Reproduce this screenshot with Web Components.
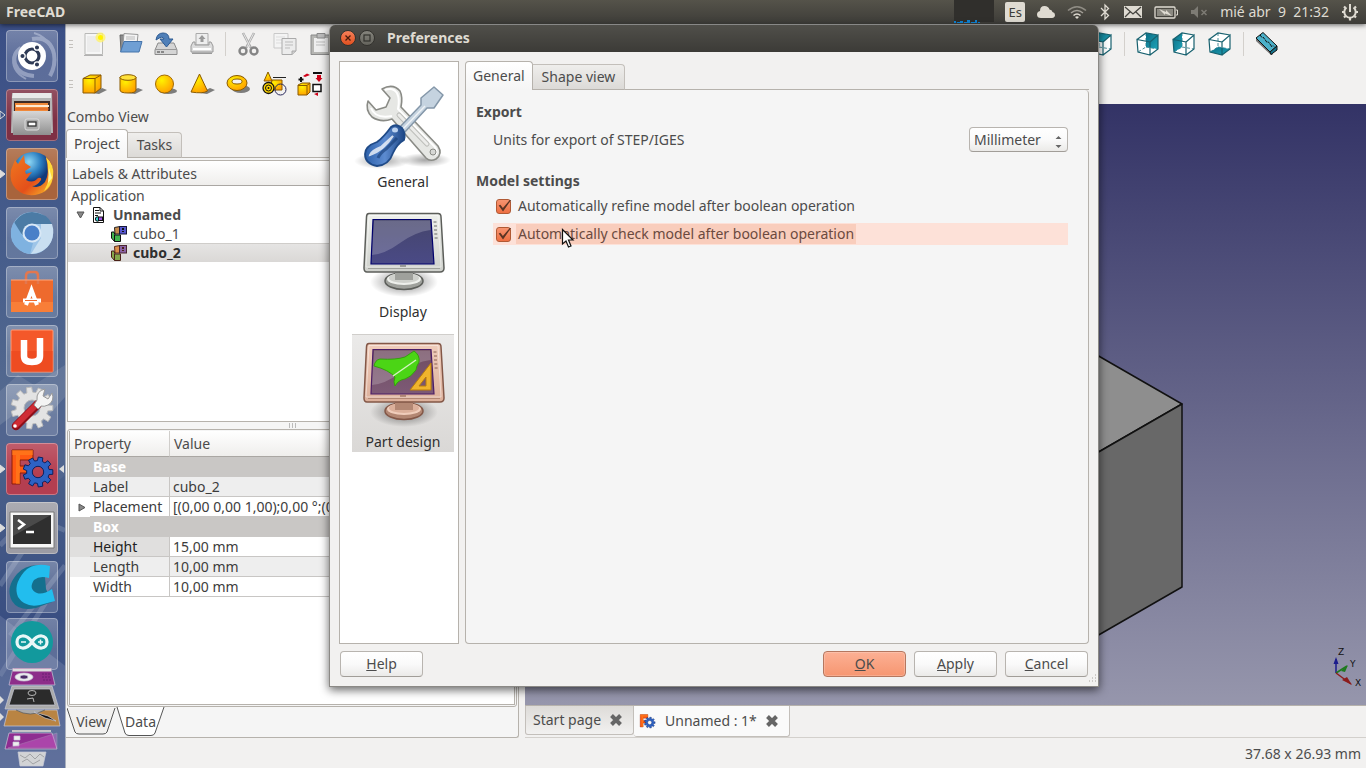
<!DOCTYPE html>
<html lang="es">
<head>
<meta charset="utf-8">
<title>FreeCAD</title>
<style>
  html, body { margin: 0; height: 100%; overflow: hidden; }
  body {
    font: 14px/20px "Noto Sans", "Open Sans", sans-serif;
    color: #4c4c4c;
    background: #f2f1f0;
    --frame: #b6b2ac;
    --window: #f2f1f0;
    --pane: #f5f5f5;
  }
</style>
</head>
<body>
<desk-top></desk-top>

<script>
// ---------- Icons ----------
const cube = (face) => `<defs><linearGradient id="tl" y2="1"><stop stop-color="#0b6e85"/><stop offset="1" stop-color="#1fa3b8"/></linearGradient></defs>
  <path d="M1 7.500L14 10V23L2 20ZM14 10L22 3V17L14 23ZM1 7.500L10 1L22 3L14 10Z" fill="#fff"/>
  <path d="M10 1V15L2 20M10 15L22 17" fill="none" stroke="#4b8e9a" stroke-dasharray="3 2"/>
  <path d="${face}" fill="url(#tl)"/>
  <path d="M1 7.500L14 10V23L2 20ZM14 10L22 3V17L14 23M1 7.500L10 1L22 3" fill="none" stroke="#17616f" stroke-width="1.200"/>`;

const gold = `<defs><radialGradient id="gd" cx=".35" cy=".3" r=".8"><stop stop-color="#fff200"/><stop offset=".5" stop-color="#ffc400"/><stop offset="1" stop-color="#ff9a00"/></radialGradient></defs>`;
const goldShadow = `<path d="M10 21L20 16L25 18L17 22Z" fill="#555" opacity=".75"/>`;

const cog = (cx, cy, r, n, fill, stroke) => {
  let d = '';
  for (let i = 0; i < n; i++) {
    [[-.32, r * .76], [-.22, r], [.22, r], [.32, r * .76]].forEach(([o, rad]) => {
      const a = (i + o) * 2 * Math.PI / n;
      d += `${d ? 'L' : 'M'}${(cx + Math.cos(a) * rad).toFixed(1)} ${(cy + Math.sin(a) * rad).toFixed(1)}`;
    });
  }
  const h = r * .38;
  d += `ZM${cx - h} ${cy}a${h} ${h} 0 1 0 ${2 * h} 0a${h} ${h} 0 1 0 ${-2 * h} 0Z`;
  return `<path fill-rule="evenodd" d="${d}" fill="${fill}" stroke="${stroke}"/>`;
};

const monitor = (c) => `
  <defs>
    <radialGradient id="sh"><stop offset=".3" stop-color="#000" stop-opacity=".35"/><stop offset="1" stop-color="#000" stop-opacity="0"/></radialGradient>
    <linearGradient id="sc" x2="0" y2="1"><stop stop-color="${c.top}"/><stop offset="1" stop-color="${c.low}"/></linearGradient>
    <linearGradient id="bs" x2="0" y2="1"><stop stop-color="${c.light}"/><stop offset="1" stop-color="${c.body}"/></linearGradient>
  </defs>
  <ellipse cx="49" cy="77" rx="34" ry="15" fill="url(#sh)"/>
  <ellipse cx="49" cy="76" rx="19" ry="8.500" fill="${c.neck}" stroke="${c.edge}" stroke-width="1.500"/>
  <ellipse cx="49" cy="74" rx="17" ry="6" fill="${c.light}"/>
  <ellipse cx="49" cy="73" rx="15" ry="5" fill="${c.body}"/>
  <rect x="40" y="66" width="18" height="9" fill="${c.neck}"/>
  <path d="M14 8.500H83Q86 8.500 86 12L89 63Q89 67 85 67H12Q9 67 9 63L11.500 12Q11.500 8.500 14 8.500Z" fill="url(#bs)" stroke="${c.edge}" stroke-width="1.500"/>
  <path d="M14 10.500H83L86 62H11Z" fill="none" stroke="#fff" stroke-opacity=".45"/>
  <path d="M13 63.500H85" stroke="${c.neck}"/>
  <path d="M18 14.500H76L79 59H16Z" fill="url(#sc)" stroke="${c.line}" stroke-width="1.200"/>
  <path d="M19 15.500H75L75.500 25Q60 27 45 38T17 50Z" fill="#fff" opacity=".2"/>
  <path d="M78.500 17h3M79 21h3M79 25h3M79.300 29h3M79.600 33h3" stroke="${c.edge}" stroke-width="1.600" opacity=".6"/>
  <path d="M45 61h6" stroke="${c.edge}"/>`;

const FREECAD = `<path d="M6 7H27V17H14V23H22V30H14V41H6Z" fill="#ff5a12" stroke="#8a1d08"/>
  <path d="M6 7H27V12H14V41H10V12H6Z" fill="#ff8a1f" opacity=".5"/>${cog(32, 29, 15, 9, '#2d62c4', '#0b2260')}`;

const ICONS = {
  // document toolbar
  new: [24, `<path d="M3 1.500H20.500V22.500H3Z" fill="#f6f6f6" stroke="#b9b9b7"/><path d="M5 4H18V20H5Z" fill="#ececec"/><path d="M2 23.500H21" stroke="#888" opacity=".6"/><circle cx="18.500" cy="5.500" r="5" fill="#fff36a" opacity=".8"/><circle cx="18.500" cy="5.500" r="2.500" fill="#fff200"/>`],
  open: [24, `<path d="M2 3H9L11 5H19V19H3Z" fill="#8d8d8d" stroke="#666"/><path d="M6 1.500L20 2.500L19 12H5Z" fill="#f4f4f4" stroke="#999"/><path d="M8 5H17M8 7H17" stroke="#bbb"/><path d="M6 9.500H24L21 20H2.500Z" fill="#6f9fd4" stroke="#4574ab"/>`],
  save: [24, `<path d="M4 11H20L23 18V22.500H1V18Z" fill="#d5d5d5" stroke="#8b8b8b"/><path d="M1 17.500H23" stroke="#999"/><path d="M3 20h3M7 20h3" stroke="#888" stroke-width="2"/><path d="M2 8Q3 1 9 1Q15 1 15 7H19L12.500 15L6 7H10Q9 3 2 8Z" fill="#4f7fb8" stroke="#2c5a92"/>`],
  print: [24, `<path d="M6 1.500H18V13H6Z" fill="#eee" stroke="#aaa"/><path d="M12 3L15.500 7H13.500V10H10.500V7H8.500Z" fill="#999"/><path d="M3 10H5V13H19V10H21L23 14V20H1V14Z" fill="#dcdcdc" stroke="#9a9a9a"/><path d="M3 17H21" stroke="#fff" stroke-width="2"/><path d="M2 20.500H22V22H2Z" fill="#999"/>`],
  cut: [24, `<path d="M6 1L14 16M17 1L9 16" stroke="#aaa" stroke-width="2.500"/><path d="M6.500 1.500L13 15M16.500 1.500L10 15" stroke="#e6e6e6"/><ellipse cx="6" cy="19" rx="3.500" ry="3.500" fill="none" stroke="#858585" stroke-width="2.400"/><ellipse cx="17" cy="19" rx="3.500" ry="3.500" fill="none" stroke="#858585" stroke-width="2.400"/>`],
  copy: [24, `<path d="M1 1.500H15V16H1Z" fill="#f4f4f4" stroke="#c9c9c9"/><path d="M3 5h9M3 8h9M3 11h7" stroke="#ddd"/><path d="M9 6.500H23V19L19 22.500H9Z" fill="#ececec" stroke="#aaa"/><path d="M12 10h8M12 13h8M12 16h5" stroke="#bbb"/><path d="M19 22.500V19H23" fill="#ccc" stroke="#aaa"/>`],
  paste: [24, `<path d="M2 3H22V22.500H2Z" fill="#b5b5b2" stroke="#8a8a8a"/><path d="M5 6H19V20H5Z" fill="#eee"/><path d="M8 1.500H16V6H8Z" fill="#bbb" stroke="#888"/><path d="M7 10h9M7 13h9" stroke="#bbb"/>`],
  // part primitives
  box: [24, goldShadow + gold + `<path d="M1 6.500L8 3H19V16L13 21H1Z" fill="url(#gd)" stroke="#8a5b00"/><path d="M1 6.500H13L19 3M13 6.500V21" fill="none" stroke="#8a5b00"/>`],
  cylinder: [24, goldShadow + gold + `<path d="M2 5V18Q2 21 10 21T18 18V5Z" fill="url(#gd)" stroke="#8a5b00"/><ellipse cx="10" cy="5.500" rx="8" ry="2.800" fill="#ffe13a" stroke="#8a5b00"/>`],
  sphere: [24, `<ellipse cx="14" cy="19" rx="9" ry="3" fill="#555" opacity=".75"/>` + gold + `<circle cx="10.500" cy="12" r="9" fill="url(#gd)" stroke="#a36b00"/>`],
  cone: [24, goldShadow + gold + `<path d="M9.500 2L17.500 19Q13 22 1 20Z" fill="url(#gd)" stroke="#8a5b00"/>`],
  torus: [24, `<ellipse cx="15" cy="17" rx="9" ry="4" fill="#555" opacity=".75"/>` + gold + `<path fill-rule="evenodd" d="M1 11a10 7.500 0 1 0 20 0a10 7.500 0 1 0 -20 0M6 9.500a5 2.500 0 1 0 10 0a5 2.500 0 1 0 -10 0" fill="url(#gd)" stroke="#8a5b00"/>`],
  primitives: [24, gold + `<path d="M10 8H20V18H8Z" fill="url(#gd)" stroke="#8a5b00"/><path d="M6 0L10 9H2Z" fill="url(#gd)" stroke="#8a5b00"/><path d="M11 5.500H24" stroke="#222"/><circle cx="6.500" cy="16" r="5.500" fill="#ffd500" stroke="#111" stroke-width="1.300"/><circle cx="6.500" cy="16" r="3" fill="none" stroke="#111"/><circle cx="6.500" cy="16" r="1" fill="#111"/><circle cx="18.500" cy="17.500" r="5.500" fill="none" stroke="#27275c"/>`],
  builder: [24, gold + `<path d="M0 13L4 11H12V20L9 23H0Z" fill="url(#gd)" stroke="#8a5b00"/><path d="M0 13.500H9L12 11M9 14V23" fill="none" stroke="#8a5b00"/><path d="M15 12.500H23V19.500H15Z" fill="#fff" stroke="#111" stroke-width="1.500"/><path d="M15 1H24" stroke="#111" stroke-width="2"/><path d="M3 5V10M.5 7.500H5.500" stroke="#111" stroke-width="2"/><path d="M5 4L9 1.500L12 3L7 5ZM19 3H23V6H24.500L21 10L17.500 6H19ZM16 22L20 20.500V24Z" fill="#d00018"/>`],
  // view toolbar
  viewTop: [24, cube('M1 7.500L10 1L22 3L14 10Z')],
  viewRear: [24, cube('M10 1L22 3V17L10 15Z')],
  viewLeft: [24, cube('M1 7.500L10 1V15L2 20Z')],
  viewBottom: [24, cube('M2 20L10 15L22 17L14 23Z')],
  measure: [24, `<path d="M1 6L6 11L18 23L16 23L1 9Z" fill="#777"/><path d="M1 6L8 .5L22 14L15 20Z" fill="#4bb0c9" stroke="#111"/><path d="M5 3l2 2.500M8 5l1.500 2M10 7.500l2 3M13 9.500l1.500 2M15 12l2 3M18 13.500l1 1" stroke="#111"/><path d="M15 20L22 14V18L16 22.500Z" fill="#16758e" stroke="#111"/>`],
  // tree
  doc: [16, `<path d="M2.500 .5H9L12.500 4V15.500H2.500Z" fill="#fff" stroke="#111"/><path d="M4 3.500h4M4 6h6M4 8.500h3" stroke="#111"/><path d="M9 .5V4H12.500" fill="none" stroke="#111"/><circle cx="6.500" cy="12" r="2.200" fill="#35d0d0" stroke="#111"/><rect x="7.500" y="10" width="4" height="3.500" fill="#a050e0" stroke="#111"/>`],
  solid: [16, `<path d="M3.500 1.500L9 .5V8H4Z" fill="#c68b4c" stroke="#222"/><rect x="8.500" y=".5" width="7" height="7.500" fill="#5758cf" stroke="#17173b"/><path d="M12 2v2M12 5v1" stroke="#111" stroke-width="2"/><path d="M.5 6H3L4 9H9.500V15.500H3.500L.5 12Z" fill="#41b44e" stroke="#111"/><path d="M3.500 15.500V9" stroke="#111"/>`],
  solidSel: [16, `<path d="M3.500 1.500L9 .5V8H4Z" fill="#dd904c" stroke="#5b2c17"/><rect x="8.500" y=".5" width="7" height="7.500" fill="#8a62a4" stroke="#4a2430"/><path d="M12 2v2M12 5v1" stroke="#4a2018" stroke-width="2"/><path d="M.5 6H3L4 9H9.500V15.500H3.500L.5 12Z" fill="#84a64b" stroke="#4a2018"/><path d="M3.500 15.500V9" stroke="#4a2018"/>`],
  // top panel
  cloud: [20, `<path d="M5 16Q1 16 1 12.500Q1 9.500 4 9Q4 4 8.500 4Q12.500 4 13.500 7.500Q16 7.500 16.500 10Q19 10.500 19 13T16 16Z" fill="#dfdbd2"/>`],
  wifi: [20, `<g fill="none" stroke="#dfdbd2" stroke-width="1.600"><path d="M1 8.500Q10 1 19 8.500" opacity=".45"/><path d="M4 11Q10 6 16 11" opacity=".6"/><path d="M6.500 13.500Q10 10.500 13.500 13.500"/></g><path d="M8 15Q10 13.500 12 15L10 17Z" fill="#dfdbd2"/>`],
  bluetooth: [14, `<path d="M3 3L10.500 10.500L7 14V0L10.500 3.500L3 11" fill="none" stroke="#dfdbd2" stroke-width="1.300"/>`],
  mail: [20, `<path d="M1 4H19V16H1Z" fill="#dfdbd2"/><path d="M2 5L10 12L18 5M2 15L7 10M18 15L13 10" fill="none" stroke="#45443f" stroke-width="1.300"/>`],
  battery: [24, `<rect x="1" y="7" width="20" height="11" rx="1" fill="none" stroke="#dfdbd2" stroke-width="1.300"/><path d="M22 10H23.500V15H22" fill="none" stroke="#dfdbd2"/><rect x="3" y="9" width="16" height="7" fill="#8b8981"/><path d="M5 9L12 12V10L18 16L11 13.500V15Z" fill="#dfdbd2"/>`],
  mute: [20, `<path d="M2 8H5L9 4V16L5 12H2Z" fill="#7d7b74"/><path d="M12.500 8L17.500 13M17.500 8L12.500 13" stroke="#7d7b74" stroke-width="1.500"/>`],
  session: [20, `<g fill="none" stroke="#dfdbd2"><path d="M6.500 5.500a5.700 5.700 0 1 0 7 0" stroke-width="2"/><path d="M10 2V10" stroke-width="2"/><path d="M2 10H4M16 10H18M4 15.500L5.500 14M16 15.500L14.500 14M10 16V18.500M4 4.500L5.500 6M16 4.500L14.500 6" stroke-width="2.200"/></g>`],
  // dialog categories
  tools: [96, `<defs>
      <radialGradient id="gs"><stop stop-color="#000" stop-opacity=".35"/><stop offset="1" stop-color="#000" stop-opacity="0"/></radialGradient>
      <linearGradient id="hd"><stop stop-color="#2d61ab"/><stop offset=".5" stop-color="#5c8bd0"/><stop offset="1" stop-color="#1d4685"/></linearGradient></defs>
    <ellipse cx="27" cy="86" rx="28" ry="8" fill="url(#gs)"/><ellipse cx="70" cy="85" rx="26" ry="7" fill="url(#gs)"/>
    <path d="M27 14Q38 8 45 16Q48 22 46 32L83 71Q88 79 81 84Q75 87 71 83L37 44Q26 48 17 42Q10 35 13 26L21 35L31 32L35 23Z" fill="#e6e7e4" stroke="#8a8b86" stroke-width="1.600" stroke-linejoin="round"/>
    <path d="M30 15Q38 12 42 18Q45 24 43 34L80 72Q83 77 80 80M16 33Q20 44 37 41" fill="none" stroke="#fff" stroke-width="2"/>
    <path d="M44 40L72 69" stroke="#bdbeba" stroke-width="5" stroke-linecap="round"/><path d="M44 40L72 69" stroke="#ececea" stroke-width="3" stroke-linecap="round"/>
    <circle cx="78" cy="77" r="3" fill="#d7d8d5" stroke="#8a8b86"/>
    <path d="M43 54L66 30V23L79 12L88 20L79 33H72L49 58Z" fill="#c5d3e0" stroke="#8497a9" stroke-width="1.500" stroke-linejoin="round"/>
    <path d="M46 56L70 31" stroke="#eef2f6" stroke-width="1.500"/>
    <path d="M36 52Q41 48 47 53Q51 58 49 65Q42 69 38 78Q34 90 22 91Q10 89 10 79Q10 71 22 67Q29 62 36 52Z" fill="url(#hd)" stroke="#1f4a87" stroke-width="1.800"/>
    <path d="M15 80Q16 76 26 72L38 61Q28 76 15 80Z" fill="#fff" stroke="#fff" stroke-width="2" opacity=".75"/><path d="M23 83Q25 78 31 74L42 63" stroke="#153c75" stroke-width="3" fill="none" opacity=".6"/>
    <ellipse cx="40" cy="55" rx="3" ry="2.500" fill="#bcd2f0"/>`],
  display: [96, monitor({ light: '#eef0ec', body: '#cfd1cc', neck: '#9fa19c', edge: '#5c5e5a', top: '#45456c', low: '#4a4a86', line: '#00006c' })],
  partDesign: [96, monitor({ light: '#f0cdbb', body: '#dcb09b', neck: '#b38773', edge: '#835747', top: '#704c60', low: '#7d5a76', line: '#4b1d66' }) +
    `<path d="M19 31Q20 25 25 24Q41 25 50 22Q56 18 59 16Q65 20 64 27Q61 32 61 35Q56 42 50 44Q43 45 40 51Q38 47 40 42Q34 35 19 31Z" fill="#4bd515" stroke="#35a10c"/>
     <path d="M38 41L61 25" stroke="#d7f2c4" stroke-width="1.500"/>
     <path fill-rule="evenodd" d="M76 28V55H55ZM71 42L64 51H71Z" fill="#f0b42c" stroke="#b97d0b"/>`],
  // launcher
  dash: [52, `<g fill="none" stroke="#c8d0e4" opacity=".5"><path d="M26 9Q44 6 48 24Q50 35 44 46" stroke-width="4"/><path d="M28 3Q40 6 45 18M8 26Q4 40 20 49" stroke-width="2"/><path d="M15 18Q6 24 9 34Q13 45 28 46" stroke-width="4"/></g>
    <circle cx="26" cy="26" r="14" fill="#fff"/><circle cx="26" cy="26" r="7" fill="none" stroke="#2e3a55" stroke-width="3.200"/>
    <g stroke="#fff" stroke-width="1.300" fill="#2e3a55"><circle cx="16.500" cy="26" r="2.700"/><circle cx="31" cy="17.500" r="2.700"/><circle cx="31" cy="34.500" r="2.700"/></g>`],
  files: [52, `<defs><linearGradient id="f" x2="0" y2="1"><stop stop-color="#d7d7d7"/><stop offset="1" stop-color="#8f8f8f"/></linearGradient></defs>
    <path d="M6 4H46L47 44H5Z" fill="#b5b5b5"/><path d="M7 4H45V9H6Z" fill="#e9e9e9"/><path d="M8 12H44V23H8Z" fill="#3c2a26"/><path d="M9 14H42V22H9Z" fill="#f0893a"/><path d="M10 17H43" stroke="#ffe9d2" stroke-width="2"/><path d="M9 20H43" stroke="#d85b23"/>
    <path d="M7 22H45V46H7Z" fill="url(#f)"/><rect x="19" y="30" width="14" height="11" rx="2" fill="#aaa" stroke="#ddd"/><rect x="22" y="33" width="8" height="4" fill="#fff" stroke="#333" stroke-width="1.300"/>`],
  firefox: [52, `<defs><radialGradient id="b" cx=".4" cy=".25"><stop stop-color="#8fd8f5"/><stop offset=".6" stop-color="#2a7dc0"/><stop offset="1" stop-color="#123a7a"/></radialGradient><linearGradient id="o" x2="1" y2="1"><stop stop-color="#f07a20"/><stop offset=".6" stop-color="#e4501a"/><stop offset="1" stop-color="#f9c32c"/></linearGradient></defs>
    <circle cx="27" cy="24" r="20" fill="url(#b)"/>
    <path d="M40 9Q47 14 47 26Q47 42 33 46Q20 50 10 41Q3 34 5 22L9 12L12 16L18 7L19 15L25 19L19 23L20 26L26 24L20 32Q27 36 32 30Q36 29 35 32Q31 38 26 38Q33 41 39 34Q44 26 40 9Z" fill="url(#o)"/>
    <path d="M40 9Q49 17 47 29Q45 39 38 43Q45 31 42 23Q42 15 40 9Z" fill="#ffd93b"/><path d="M43 20L46 30L42 35Z" fill="#fff4a0"/>`],
  chromium: [52, `<circle cx="26" cy="26" r="21" fill="#9ec5e8"/><path d="M6 20Q12 6 26 5Q41 6 46 17H26L17 28Z" fill="#4b7ba5"/><path d="M46 17Q49 26 45 35Q39 46 25 47L35 31V17Z" fill="#c9dff1"/><path d="M8 15L18 31L27 36L24 47Q12 46 6 34Q3 23 8 15Z" fill="#7fb2e0"/><circle cx="26" cy="26" r="9.500" fill="#d9e8f6"/><circle cx="26" cy="26" r="7.500" fill="#4a80c8"/>`],
  software: [52, `<path d="M5 14H47V46H5Z" fill="#ee6a2d"/><path d="M5 36H47V46H5Z" fill="#ff8c3f" opacity=".6"/><path d="M20 18V10Q20 6 24 6H29Q32 6 32 10V18" fill="none" stroke="#e2774f" stroke-width="2.500"/><path d="M5 14H47" stroke="#ffa67a"/><path d="M20 39L25.500 24L31 39" fill="none" stroke="#fff" stroke-width="4"/><path d="M17 34.500H35" stroke="#fff" stroke-width="4"/><path d="M19 34.500H31" stroke="#ee6a2d"/>`],
  ubuntuOne: [52, `<rect x="5" y="5" width="42" height="42" rx="1" fill="#f4582a" stroke="#ff9b77"/><path d="M5 26H47V47H5Z" fill="#e63e17" opacity=".45"/><path d="M18 15V31Q18 37 26 37T34 31V13" fill="none" stroke="#fff" stroke-width="6.500"/>`],
  settings: [52, cog(26, 24, 21, 11, '#e3e3e3', '#bbb') + `<path d="M10 42L32 20" stroke="#8e0f19" stroke-width="8.500" stroke-linecap="round"/><path d="M10 41L32 19" stroke="#cf2c35" stroke-width="6" stroke-linecap="round"/><path d="M31 16Q30 7 39 5L37 12L42 15L46 9Q49 17 42 21Q38 23 35 22L32 25L28 21Z" fill="#f4f4f4" stroke="#999"/><circle cx="9" cy="42" r="1.800" fill="#fff"/>`],
  freecad: [52, FREECAD],
  terminal: [52, `<path d="M4 10H48V46H4Z" fill="#f7f7f7" stroke="#777"/><path d="M7 13H45V42H7Z" fill="#2f2f2f"/><path d="M7 13H45L7 34Z" fill="#555" opacity=".7"/><path d="M12 18L18 22.500L12 27" fill="none" stroke="#fff" stroke-width="2.500"/><path d="M20 30H28" stroke="#fff" stroke-width="2.500"/>`],
  cura: [52, `<path d="M38 5Q21 2 11 13Q-1 27 6 40Q13 51 30 47L46 41L40 28Z" fill="#14708e"/><path d="M44 5Q27 1 18 11Q7 24 12 36Q19 47 34 44L49 40L46 28Q37 34 31 32Q22 28 28 19Q34 14 43 17Z" fill="#22bdee"/>`],
  arduino: [52, `<circle cx="26" cy="24" r="21" fill="#12999d"/><g fill="none" stroke="#e9f7f7" stroke-width="3.200"><path d="M26 24C20 15 11 17 11 24S20 33 26 24S41 17 41 24S32 33 26 24"/></g><path d="M15 24h5M32 24h5M34.500 21.500v5" stroke="#e9f7f7" stroke-width="1.500"/>`],
};

class FcIcon extends HTMLElement {
  connectedCallback() {
    const [box, body] = ICONS[this.getAttribute('name')];
    const size = this.getAttribute('size') || box;
    this.attachShadow({ mode: 'open' }).innerHTML = `
      <style>:host { display: block; flex: none; } svg { display: block; overflow: visible; }</style>
      <svg width="${size}" height="${size}" viewBox="0 0 ${box} ${box}" aria-hidden="true">${body}</svg>`;
  }
}

// Base for the elements whose markup never changes
class FcElement extends HTMLElement {
  constructor() {
    super();
    this.attachShadow({ mode: 'open' });
  }
  connectedCallback() {
    this.shadowRoot.innerHTML = this.template();
  }
}

// ---------- Top panel ----------
class TopPanel extends FcElement {
  template() {
    return `
      <style>
        :host { display: flex; align-items: center; height: 24px; padding: 0 6px; box-sizing: border-box;
          background: linear-gradient(#55534a, #3d3c38); color: #dfdbd2; position: relative; z-index: 1;
          box-shadow: 0 1px 5px rgba(0,0,0,.6); }
        b { margin-right: auto; }
        .items { display: flex; align-items: center; gap: 11px; height: 24px; }
        .load { width: 40px; height: 22px; background: #302f2c; align-self: start; }
        .load svg { display: block; }
        .lang { width: 20px; height: 20px; border-radius: 2px; background: #dfdbd2; color: #3d3c38; text-align: center; font-size: 13px; }
        time { white-space: pre; }
      </style>
      <b>FreeCAD</b>
      <div class="items">
        <div class="load"><svg width="40" height="24"><path d="M0 21h2v2h-2zM3 22h3v1h-3zM6 21h3v2h-3zM10 22h3v1h-3zM13 20h3v3h-3zM17 22h4v1h-4zM21 20h2v3h-2zM24 22h2v1h-2z" fill="#0d83d6"/></svg></div>
        <span class="lang">Es</span>
        <fc-icon name="cloud"></fc-icon>
        <fc-icon name="wifi"></fc-icon>
        <fc-icon name="bluetooth"></fc-icon>
        <fc-icon name="mail"></fc-icon>
        <fc-icon name="battery"></fc-icon>
        <fc-icon name="mute"></fc-icon>
        <time>mié abr  9  21:32</time>
        <fc-icon name="session"></fc-icon>
      </div>`;
  }
}

// ---------- Launcher ----------
class LauncherTile extends FcElement {
  template() {
    const icon = this.getAttribute('icon');
    const left = this.hasAttribute('running') ? `<svg width="6" height="10"><path d="M0 1L5 5L0 9Z" fill="${this.getAttribute('running') === 'away' ? 'none' : '#ddd'}" stroke="#ddd"/></svg>` : '<i></i>';
    const right = this.hasAttribute('active') ? '<svg width="6" height="10"><path d="M6 1L1 5L6 9Z" fill="#ddd"/></svg>' : '';
    return `
      <style>
        :host { display: grid; grid-template-columns: 6px 52px 7px; align-items: center; --tile: rgba(255,255,255,.16); }
        button { padding: 0; border: 0; width: 52px; height: 52px; border-radius: 4px; background: linear-gradient(rgba(255,255,255,.16), rgba(255,255,255,0) 60%), var(--tile);
          box-shadow: inset 0 0 0 1px rgba(255,255,255,.3); }
      </style>
      ${left}<button aria-label="${icon}"><fc-icon name="${icon}"></fc-icon></button>${right}`;
  }
}

class UnityLauncher extends FcElement {
  template() {
    return `
      <style>
        :host { display: grid; width: 66px; box-sizing: border-box; overflow: hidden; border-right: 1px solid #a9afbd;
          background: linear-gradient(#3b4f86, #465d8b 30%, #5a6f92 60%, #3f5385 80%, #62719b); }
        .scene, nav { grid-area: 1 / 1; }
        .scene { width: 65px; height: 100%; }
        nav { display: flex; flex-direction: column; gap: 7px; padding-top: 6px; }
        .stack { display: block; margin-top: -9px; }
        .last { margin-top: -2px; }
      </style>
      <svg class="scene" viewBox="0 0 65 744" preserveAspectRatio="none" aria-hidden="true">
        <path d="M0 366L18 350L34 360L65 340V450L40 470L0 440Z" fill="#7585a5" opacity=".5"/>
        <path d="M0 400L24 382L38 402L65 372V744H0Z" fill="#33487d" opacity=".4"/>
        <path d="M0 520L30 490L65 505M0 560L40 500M10 610L65 540M0 650L50 570" stroke="#9fabc8" stroke-width="5" opacity=".3" fill="none"/>
        <path d="M0 590L65 640V744H0Z" fill="#8190b5" opacity=".35"/>
      </svg>
      <nav aria-label="Launcher">
        <launcher-tile icon="dash"></launcher-tile>
        <launcher-tile icon="files" running="away" style="--tile: #7e3044"></launcher-tile>
        <launcher-tile icon="firefox" running style="--tile: #a8643c"></launcher-tile>
        <launcher-tile icon="chromium"></launcher-tile>
        <launcher-tile icon="software"></launcher-tile>
        <launcher-tile icon="ubuntuOne"></launcher-tile>
        <launcher-tile icon="settings"></launcher-tile>
        <launcher-tile icon="freecad" running active style="--tile: #b43e50"></launcher-tile>
        <launcher-tile icon="terminal" running style="--tile: #9c9ca4"></launcher-tile>
        <launcher-tile icon="cura"></launcher-tile>
        <launcher-tile class="last" icon="arduino"></launcher-tile>
        <svg class="stack" width="65" height="102" viewBox="0 0 65 102" aria-hidden="true">
          <g stroke="#c9cbd8" stroke-opacity=".7">
            <path d="M13 0H51L55 17H9Z" fill="#8d2d8a"/><ellipse cx="24" cy="9" rx="9" ry="4" fill="#eee"/><ellipse cx="24" cy="9" rx="4" ry="2" fill="#4b2a66"/><path d="M13 2H51" stroke-width="3" stroke="#ddd" stroke-opacity="1"/><path d="M42 6h8M42 9h9M43 12h9" stroke="#5d1b66" stroke-dasharray="2 1"/>
            <path d="M12 18H52L59 41H5Z" fill="#aaa"/><path d="M14 21H50L55 37H9Z" fill="#2b2b2b"/><ellipse cx="32" cy="25" rx="4" ry="2.500" fill="none" stroke="#eee"/><path d="M27 31L33 30L34 34" fill="none" stroke="#eee"/>
            <path d="M8 42H57L60 58H4Z" fill="#b98443"/><path d="M16 42Q30 50 45 42" fill="#aaa" stroke="#555"/><path d="M34 44L48 48L56 53L45 50Z" fill="#111"/>
            <path d="M9 65H52L57 81H5Z" fill="#8e2d91"/><path d="M12 63H51" stroke="#efe9d8" stroke-width="2"/><path d="M14 68h6v4h-6zM13 74h6v4h-6z" fill="#eee"/><path d="M8 80L57 65V80Z" fill="#d86bd0" opacity=".4"/>
            <path d="M18 84H46L43 98H20Z" fill="#d2d3d5"/><path d="M20 87L25 90L30 86L35 91L40 86L44 89M22 94L27 91L33 96L40 92" fill="none" stroke="#8b8d90"/>
          </g>
          <path d="M0 28L4 32L0 36ZM0 45L4 49L0 53Z" fill="#ddd"/>
        </svg>
      </nav>`;
  }
}

// ---------- Toolbars ----------
class ToolBar extends FcElement {
  template() {
    const items = this.getAttribute('tools').split(' ').map(name =>
      name === '|' ? '<hr>' : `<button aria-label="${name}"><fc-icon name="${name}"></fc-icon></button>`).join('');
    return `
      <style>
        :host { display: flex; align-items: center; height: 40px; }
        button { width: 36px; height: 36px; padding: 6px; border: 0; background: none; }
        hr { width: 1px; height: 24px; margin: 0 5px; border: 0; background: #d3d0cc; }
        .grip { width: 4px; height: 8px; margin: 0 3px; border-top: 1px solid #c4c1bd; border-bottom: 1px solid #c4c1bd; box-sizing: border-box; display: grid; align-items: center; }
        .grip::before { content: ""; height: 1px; background: #c4c1bd; }
      </style>
      ${this.hasAttribute('grip') ? '<span class="grip"></span>' : ''}${items}`;
  }
}

// ---------- Tabs ----------
class TabStrip extends FcElement {
  template() {
    const tabs = this.getAttribute('tabs').split(',').map((t, i) =>
      `<button role="tab" aria-selected="${i === 0}">${t}</button>`).join('');
    return `
      <style>
        :host { display: block; }
        div { display: flex; align-items: flex-end; box-shadow: inset 0 -1px var(--frame); }
        button { font: inherit; color: inherit; height: 26px; padding: 0 9px; border: 1px solid #c3bfba; border-bottom-color: var(--frame);
          border-left: 0; border-radius: 0 4px 0 0; background: linear-gradient(#efeeec, #dcdad7); }
        button[aria-selected=true] { height: 29px; padding: 0 7px; border: 1px solid var(--frame); border-bottom: 0; border-radius: 4px 4px 0 0; background: linear-gradient(#fff, #f5f5f5); }
      </style>
      <div role="tablist">${tabs}</div>`;
  }
}

// ---------- Combo view ----------
class ModelTree extends FcElement {
  template() {
    return `
      <style>
        :host { display: block; border: 1px solid var(--frame); background: #fff; overflow: hidden; }
        header { height: 24px; line-height: 26px; padding: 0 4px; border-bottom: 1px solid #aaa7a3; background: linear-gradient(#fff, #efeeec); }
        ul { list-style: none; margin: 0; padding: 0; line-height: 19px; }
        li { display: flex; align-items: center; gap: 6px; height: 19px; padding-left: 3px; }
        .l1 { padding-left: 8px; }
        .l2 { padding-left: 43px; }
        .sel { color: #2f2f2f; background: linear-gradient(#e6e5e4, #dad8d6); box-shadow: inset 0 1px #cfcdca; }
      </style>
      <header>Labels &amp; Attributes</header>
      <ul>
        <li>Application</li>
        <li class="l1"><svg width="9" height="8"><path d="M1 1H8L4.500 7Z" fill="#888" stroke="#555"/></svg><fc-icon name="doc"></fc-icon><b>Unnamed</b></li>
        <li class="l2"><fc-icon name="solid"></fc-icon>cubo_1</li>
        <li class="l2 sel"><fc-icon name="solidSel"></fc-icon><b>cubo_2</b></li>
      </ul>`;
  }
}

class PropertyEditor extends FcElement {
  template() {
    const rows = [['Base'], ['Label', 'cubo_2', 'alt'], ['Placement', '[(0,00 0,00 1,00);0,00 °;(0,00 0,00 0,00)]', 'group'],
      ['Box'], ['Height', '15,00 mm', 'cur'], ['Length', '10,00 mm', 'alt'], ['Width', '10,00 mm', '']];
    const html = rows.map(([name, value, cls]) => value === undefined
      ? `<tr class="head"><td></td><th colspan="2">${name}</th></tr>`
      : `<tr class="${cls}"><td>${cls === 'group' ? '<svg width="8" height="9"><path d="M1 1L7 4.500L1 8Z" fill="#888" stroke="#555"/></svg>' : ''}</td><td class="name">${name}</td><td class="value">${value}</td></tr>`).join('');
    return `
      <style>
        :host { display: block; border: 1px solid var(--frame); border-radius: 3px; padding: 1px; background: #f5f5f5; }
        .box { height: 100%; box-sizing: border-box; border: 1px solid var(--frame); border-width: 0 1px 1px; background: #fff; overflow: hidden; }
        table { width: 100%; border-collapse: separate; border-spacing: 0; table-layout: fixed; color: #3c3c3c; }
        col.mark { width: 20px; } col.name { width: 80px; }
        thead th { height: 25px; padding: 0 4px; text-align: left; font-weight: normal; color: #4c4c4c; background: linear-gradient(#fff, #efeeec); border-bottom: 1px solid #aaa7a3; }
        thead th:first-child { border-right: 1px solid #d0cecb; }
        tbody td, tbody th { height: 20px; padding: 0 3px; box-sizing: border-box; line-height: 19px; text-align: left; white-space: nowrap; }
        tbody td:first-child { padding: 0 8px; }
        tbody td svg { display: block; }
        .head { background: #c9c7c5; color: #fff; }
        .head th { padding-bottom: 1px; }
        .name, .value { border-bottom: 1px solid #c8c6c4; }
        tbody .name { border-right: 1px solid #c8c6c4; }
        .alt { background: #eee; }
        .cur td:not(.value) { background: #e0dfde; color: #222; }
      </style>
      <div class="box"><table>
        <colgroup><col class="mark"><col class="name"><col></colgroup>
        <thead><tr><th colspan="2">Property</th><th>Value</th></tr></thead>
        <tbody>${html}</tbody>
      </table></div>`;
  }
}

class ComboView extends FcElement {
  template() {
    return `
      <style>
        :host { display: flex; flex-direction: column; min-height: 0; }
        h2 { margin: 0; padding: 3px 1px 2px; font: inherit; }
        .body { flex: 1; display: flex; flex-direction: column; min-height: 0; padding: 2px 1px 0; border: 1px solid var(--frame); border-width: 0 1px 1px 0; border-radius: 0 0 3px 0; background: var(--pane); }
        model-tree { flex: 0 1 260px; }
        .split { height: 7px; display: flex; justify-content: center; align-items: center; gap: 2px; }
        .split i { width: 1px; height: 5px; background: #bbb; }
        property-editor { flex: 1; min-height: 0; }
        .bottom { display: flex; height: 30px; align-items: flex-start; }
        .bottom button { position: relative; width: 49px; height: 30px; padding: 0; border: 0; background: none; font: inherit; color: inherit; }
        .bottom svg { position: absolute; inset: 0; }
        .bottom span { position: relative; }
      </style>
      <h2>Combo View</h2>
      <tab-strip tabs="Project,Tasks"></tab-strip>
      <div class="body">
        <model-tree></model-tree>
        <div class="split"><i></i><i></i><i></i></div>
        <property-editor></property-editor>
        <div class="bottom">
          <button><svg width="49" height="30"><path d="M0 1L8 25Q9 27 12 27H36Q39 27 40 25L48 1" fill="#f2f1f0" stroke="#555"/></svg><span>View</span></button>
          <button><svg width="49" height="30"><path d="M1 0L9 26Q10 28.500 13 28.500H35Q38 28.500 39 26L48 0" fill="#fff" stroke="#555"/></svg><span>Data</span></button>
        </div>
      </div>`;
  }
}

// ---------- 3D view ----------
class ModelView extends FcElement {
  template() {
    return `
      <style>
        :host { display: flex; flex-direction: column; min-width: 0; min-height: 0; }
        .canvas { flex: 1; min-height: 0; background: linear-gradient(#333366, #9696ac); border-bottom: 1px solid var(--frame); }
        .canvas svg { display: block; width: 100%; height: 100%; }
        .docs { display: flex; align-items: flex-start; height: 32px; border-bottom: 1px solid #d3d0cc; box-sizing: border-box; }
        .tab { display: flex; align-items: center; gap: 8px; height: 29px; padding: 0 10px 0 7px; border: 1px solid #c3bfba; border-top: 0; border-radius: 0 0 3px 3px; background: linear-gradient(#dddbd8, #f2f1f0); box-sizing: border-box; }
        .tab.on { height: 31px; padding: 0 10px 0 4px; background: #fafafa; border-left: 0; }
        button { display: block; padding: 0; border: 0; background: none; }
        button svg { display: block; }
      </style>
      <div class="canvas">
        <svg viewBox="0 0 841 601" preserveAspectRatio="xMaxYMax slice" aria-label="3D view">
          <g stroke="#111" stroke-width="1.500" stroke-linejoin="round">
            <path d="M551 239L657 300L551 361L445 300Z" fill="#8e8e8e"/>
            <path d="M657 300V483L551 544V361Z" fill="#686868"/>
            <path d="M445 300V483L551 544V361Z" fill="#b0b0b0"/>
          </g>
          <g stroke-width="1.500">
            <path d="M811 569V555" stroke="#1c1c8c"/><path d="M808.500 560L811 553L813.500 560Z" fill="#1c1c8c"/>
            <path d="M811 569L822 562" stroke="#1e7a1e"/><path d="M816 567L823 561L820 568Z" fill="#1e7a1e"/>
            <path d="M811 569L826 580" stroke="#8c1c1c"/><path d="M817 576L822 573L827 581Z" fill="#8c1c1c"/>
          </g>
          <g font-family="DejaVu Sans" font-size="9" fill="#111"><text x="813" y="551">Z</text><text x="825" y="563">Y</text><text x="830" y="582">X</text></g>
        </svg>
      </div>
      <div class="docs">
        <div class="tab"><span>Start page</span>${this.cross()}</div>
        <div class="tab on"><fc-icon name="freecad" size="19"></fc-icon><span>Unnamed : 1*</span>${this.cross()}</div>
      </div>`;
  }
  cross() {
    return `<button aria-label="Close tab"><svg width="14" height="14" viewBox="0 0 14 14"><path d="M2.500 2.500L11.500 11.500M11.500 2.500L2.500 11.500" stroke="#666" stroke-width="4"/></svg></button>`;
  }
}

class AppWindow extends FcElement {
  template() {
    return `
      <style>
        :host { display: grid; grid-template-rows: 80px 1fr 30px; min-width: 0; min-height: 0; background: var(--window); }
        .tools { display: flex; justify-content: space-between; padding-right: 81px; }
        .work { display: grid; grid-template-columns: 453px 1fr; gap: 6px; min-height: 0; }
        footer { padding: 6px 5px; text-align: right; box-sizing: border-box; }
      </style>
      <div class="tools">
        <div>
          <tool-bar grip tools="new open save print | cut copy paste"></tool-bar>
          <tool-bar grip tools="box cylinder sphere cone torus primitives builder"></tool-bar>
        </div>
        <tool-bar tools="viewTop | viewRear viewLeft viewBottom | measure"></tool-bar>
      </div>
      <div class="work"><combo-view></combo-view><model-view></model-view></div>
      <footer>37.68 x 26.93 mm</footer>`;
  }
}

// ---------- Preferences dialog ----------
class PushButton extends FcElement {
  template() {
    return `
      <style>
        :host { display: block; }
        button { width: 83px; height: 26px; padding: 0; font: inherit; color: #4c4c4c; border: 1px solid #b8b4af; border-bottom-color: #a19d98; border-radius: 4px;
          background: linear-gradient(#fff, #fafafa 50%, #ebeae8); }
        :host([default]) button { border-color: #b5775f; background: linear-gradient(#fcb094, #f69671); box-shadow: inset 0 0 0 1px rgba(255,255,255,.2); }
      </style>
      <button><slot></slot></button>`;
  }
}

class PrefCategory extends FcElement {
  template() {
    return `
      <style>
        :host { display: block; }
        button { display: grid; justify-items: center; width: 102px; height: 118px; padding: 1px 0 0; border: 0; background: none; font: inherit; line-height: 21px; color: #2f2f2f; }
        :host([selected]) button { background: linear-gradient(#ebeae9, #dad8d6); box-shadow: inset 0 1px #d0cecb; }
      </style>
      <button><fc-icon name="${this.getAttribute('icon')}"></fc-icon><span><slot></slot></span></button>`;
  }
}

class CheckOption extends FcElement {
  template() {
    return `
      <style>
        :host { display: block; }
        label { display: flex; align-items: center; height: 22px; padding-left: 3px; gap: 5px; }
        input { appearance: none; flex: none; width: 15px; height: 15px; margin: 0; border: 1px solid #b05a35; border-radius: 3px; background: linear-gradient(#f79470, #ee6f42); }
        input:checked::after { content: ""; display: block; width: 14px; height: 13px; background: #5a3424; clip-path: polygon(12% 46%, 24% 40%, 42% 66%, 94% 0, 100% 5%, 43% 92%); }
        span { padding: 0 2px; line-height: 20px; }
        :host([hot]) label { background: #fde1d8; }
        :host([hot]) span { background: #f9cdbc; color: #6b4a40; }
      </style>
      <label><input type="checkbox" checked><span><slot></slot></span></label>`;
  }
}

class DialogWindow extends FcElement {
  template() {
    return `
      <style>
        :host { display: flex; flex-direction: column; box-sizing: border-box; border-radius: 6px 6px 0 0; border: 1px solid #8b8985; border-top: 0; background: var(--window); box-shadow: 0 3px 10px rgba(0,0,0,.6); }
        header { display: flex; align-items: center; gap: 3px; height: 27px; padding: 0 10px 1px; box-sizing: border-box; border-radius: 5px 5px 0 0; background: linear-gradient(#504f4a, #3c3b37); color: #dfdbd2; }
        h1 { margin: 0 0 0 9px; font-size: 14px; line-height: 20px; }
        button { width: 16px; height: 16px; padding: 0; border: 1px solid #33322e; border-radius: 50%; background: linear-gradient(#85847d, #64635c); }
        button.close { background: linear-gradient(#f6805a, #e0501f); }
        button svg { display: block; }
        .content { flex: 1; display: flex; flex-direction: column; min-height: 0; }
      </style>
      <header>
        <button class="close" aria-label="Close"><svg width="14" height="14"><path d="M4.500 4.500L9.500 9.500M9.500 4.500L4.500 9.500" stroke="#4a1c0c" stroke-width="1.300"/></svg></button>
        <button aria-label="Maximize"><svg width="14" height="14"><rect x="4" y="4" width="6" height="6" fill="none" stroke="#33322e" stroke-width="1.200"/></svg></button>
        <h1>${this.getAttribute('heading')}</h1>
      </header>
      <div class="content"><slot></slot></div>`;
  }
}

class PreferencesForm extends FcElement {
  template() {
    return `
      <style>
        :host { flex: 1; display: flex; flex-direction: column; min-height: 0; padding: 9px; gap: 7px; }
        .cols { flex: 1; display: flex; gap: 6px; min-height: 0; }
        .list { width: 102px; display: flex; flex-direction: column; gap: 12px; padding: 12px 4px 12px 12px; border: 1px solid var(--frame); background: #fff; }
        .tabs { flex: 1; display: flex; flex-direction: column; }
        .pane { flex: 1; padding: 12px 20px 12px 10px; border: 1px solid var(--frame); border-top: 0; border-radius: 0 4px 4px 4px; background: var(--pane); }
        h3 { margin: 0; font-size: 14px; line-height: 20px; }
        .row { display: flex; justify-content: space-between; align-items: center; margin: 5px 0 19px; padding-left: 17px; }
        .select { position: relative; }
        select { appearance: none; width: 99px; height: 25px; padding: 0 4px; font: inherit; color: inherit; border: 1px solid #b8b4af; border-bottom-color: #a19d98; border-radius: 4px; background: linear-gradient(#fff, #fafafa 50%, #ebeae8); }
        .select svg { position: absolute; right: 6px; top: 8px; pointer-events: none; }
        .checks { display: grid; gap: 6px; padding: 4px 0 0 17px; }
        .actions { display: flex; gap: 8px; padding: 0 1px; }
        .actions push-button:first-child { margin-right: auto; }
        .size { position: absolute; right: 1px; bottom: 2px; }
      </style>
      <div class="cols">
        <div class="list">
          <pref-category icon="tools">General</pref-category>
          <pref-category icon="display">Display</pref-category>
          <pref-category icon="partDesign" selected>Part design</pref-category>
        </div>
        <div class="tabs">
          <tab-strip tabs="General,Shape view"></tab-strip>
          <div class="pane">
            <h3>Export</h3>
            <div class="row">
              <label for="units">Units for export of STEP/IGES</label>
              <div class="select">
                <select id="units"><option>Millimeter</option></select>
                <svg width="7" height="14"><path d="M.5 4L3.500 1L6.500 4ZM.5 10L3.500 13L6.500 10Z" fill="#666"/></svg>
              </div>
            </div>
            <h3>Model settings</h3>
            <div class="checks">
              <check-option>Automatically refine model after boolean operation</check-option>
              <check-option hot>Automatically check model after boolean operation</check-option>
            </div>
          </div>
        </div>
      </div>
      <div class="actions">
        <push-button><u>H</u>elp</push-button>
        <push-button default><u>O</u>K</push-button>
        <push-button><u>A</u>pply</push-button>
        <push-button><u>C</u>ancel</push-button>
      </div>
      <svg class="size" width="10" height="10"><path d="M8 1h1M5 4h1M8 4h1M2 7h1M5 7h1M8 7h1" stroke="#c0bdb9" stroke-width="1.500"/></svg>`;
  }
}

class DeskTop extends FcElement {
  template() {
    return `
      <style>
        :host { display: grid; grid-template: 24px minmax(0, 1fr) / 66px minmax(0, 1fr); height: 100vh; position: relative; overflow: hidden; }
        top-panel { grid-column: 1 / -1; }
        dialog-window { position: absolute; left: 329px; top: 25px; width: 770px; height: 662px; z-index: 2; }
        .pointer { position: absolute; left: 561px; top: 228px; z-index: 3; }
      </style>
      <top-panel></top-panel>
      <unity-launcher></unity-launcher>
      <app-window></app-window>
      <dialog-window heading="Preferences"><preferences-form></preferences-form></dialog-window>
      <svg class="pointer" width="14" height="21" aria-hidden="true"><path d="M1.500 1.500V16L5 13L7.500 19L10 18L7.500 12H12Z" fill="#fff" stroke="#111" stroke-width="1.200"/></svg>`;
  }
}

customElements.define('fc-icon', FcIcon);
customElements.define('top-panel', TopPanel);
customElements.define('launcher-tile', LauncherTile);
customElements.define('unity-launcher', UnityLauncher);
customElements.define('tool-bar', ToolBar);
customElements.define('tab-strip', TabStrip);
customElements.define('model-tree', ModelTree);
customElements.define('property-editor', PropertyEditor);
customElements.define('combo-view', ComboView);
customElements.define('model-view', ModelView);
customElements.define('app-window', AppWindow);
customElements.define('push-button', PushButton);
customElements.define('pref-category', PrefCategory);
customElements.define('check-option', CheckOption);
customElements.define('dialog-window', DialogWindow);
customElements.define('preferences-form', PreferencesForm);
customElements.define('desk-top', DeskTop);
</script>
</body>
</html>
